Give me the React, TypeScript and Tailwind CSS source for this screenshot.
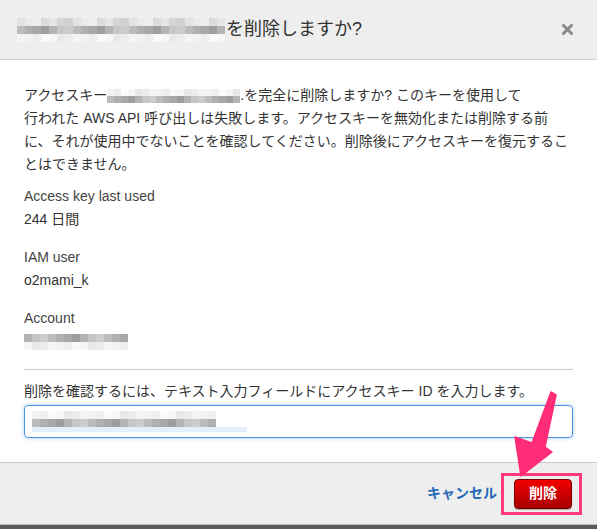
import React from "react";

const FONT = { fontFamily: '"Liberation Sans", "Noto Sans CJK JP", sans-serif' };

// pixelated (mosaic) masking, like the blurred key ids in the screenshot
const light = ["bg-[#e2e2e2]", "bg-[#d6d6d6]", "bg-[#dcdcdc]", "bg-[#eaeaea]", "bg-[#d0d0d0]", "bg-[#e6e6e6]", "bg-[#f0f0f0]"];
const dark = ["bg-[#b4b4b4]", "bg-[#a8a8a8]", "bg-[#bcbcbc]", "bg-[#c6c6c6]", "bg-[#9e9e9e]", "bg-[#b0b0b0]", "bg-[#cccccc]"];
const pale = ["bg-[#f2f2f2]", "bg-[#ececec]", "bg-[#f6f6f6]", "bg-[#eeeeee]", "bg-[#f4f4f4]", "bg-[#e8e8e8]", "bg-[#fafafa]"];

function Mosaic({ cells, cell, rows }: { cells: number; cell: number; rows: string[][] }) {
  return (
    <span className="inline-flex flex-col align-middle">
      {rows.map((row, r) => (
        <span key={r} className="flex">
          {Array.from({ length: cells }).map((_, i) => (
            <span
              key={i}
              className={row[(i * 3 + r * 2) % row.length]}
              style={{ width: cell, height: cell }}
            />
          ))}
        </span>
      ))}
    </span>
  );
}

export default function App() {
  return (
    <div className="relative w-[597px] h-[529px] overflow-hidden bg-[#5a5a5a]" style={FONT}>
      <div className="flex flex-col h-[525px] bg-white border-b border-[#bdbdbd]">
        {/* header */}
        <div className="h-[60px] shrink-0 bg-[#eeeeee] border-b border-[#cfcfcf] flex items-center justify-between pl-[17px] pr-[24px]">
          <div className="flex items-center text-[18px] text-[#333]">
            <Mosaic cells={26} cell={8} rows={[light, dark, pale]} />
            <span className="ml-[1px]">を削除しますか?</span>
          </div>
          <svg width="11" height="11" viewBox="0 0 11 11">
            <path d="M1.5 1.5 L9.5 9.5 M9.5 1.5 L1.5 9.5" stroke="#8a8a8a" strokeWidth="3" strokeLinecap="round" />
          </svg>
        </div>

        {/* body */}
        <div className="h-[402px] shrink-0 px-6 pt-[24px] text-[14px] leading-[23px] text-[#333]">
          <p>
            アクセスキー
            <Mosaic cells={19} cell={7} rows={[pale, dark]} />
            .を完全に削除しますか? このキーを使用して
            <br />
            行われた AWS API 呼び出しは失敗します。アクセスキーを無効化または削除する前
            <br />
            に、それが使用中でないことを確認してください。削除後にアクセスキーを復元するこ
            <br />
            とはできません。
          </p>

          <div className="mt-[9px]">
            <div className="text-[#444]">Access key last used</div>
            <div>244 日間</div>
          </div>
          <div className="mt-[15px]">
            <div className="text-[#444]">IAM user</div>
            <div>o2mami_k</div>
          </div>
          <div className="mt-[15px]">
            <div className="text-[#444]">Account</div>
            <div className="h-[23px] flex items-center">
              <Mosaic cells={13} cell={8} rows={[dark, pale]} />
            </div>
          </div>

          <div className="mt-[16px] border-t border-[#cccccc]" />
          <div className="mt-[10px]">削除を確認するには、テキスト入力フィールドにアクセスキー ID を入力します。</div>
          <div className="mt-[2px] h-[33px] rounded-[4px] border border-[#4a90e2] shadow-[0_0_4px_rgba(74,144,226,0.45)] flex flex-col justify-center px-[7px]">
            <Mosaic cells={23} cell={8} rows={[pale, dark]} />
            <span className="block w-[215px] h-[5px] bg-[#e3effc]" />
          </div>
        </div>

        {/* footer */}
        <div className="flex-1 bg-[#eeeeee] border-t border-[#cccccc] flex items-center justify-end pr-[15px]">
          <button className="mr-[4px] text-[14px] font-bold text-[#2268b5]">キャンセル</button>
          <div className="border-[3px] border-[#ff3a7c] pl-[10px] pr-[7px] py-[3px]">
            <button className="w-[58px] h-[30px] rounded-[4px] border border-[#7a0000] bg-gradient-to-b from-[#f20000] to-[#a80000] text-white font-bold text-[14px] shadow-[0_1px_1px_rgba(0,0,0,0.3)]">
              削除
            </button>
          </div>
        </div>
      </div>

      {/* annotation arrow */}
      <svg className="absolute left-0 top-0 pointer-events-none" width="597" height="529">
        <polygon
          points="551,392 556,395 545,447 552,452 521,476 515,437 532,443"
          fill="#ff2d78"
          stroke="#ff2d78"
          strokeWidth="1.5"
          strokeLinejoin="round"
        />
      </svg>
    </div>
  );
}
